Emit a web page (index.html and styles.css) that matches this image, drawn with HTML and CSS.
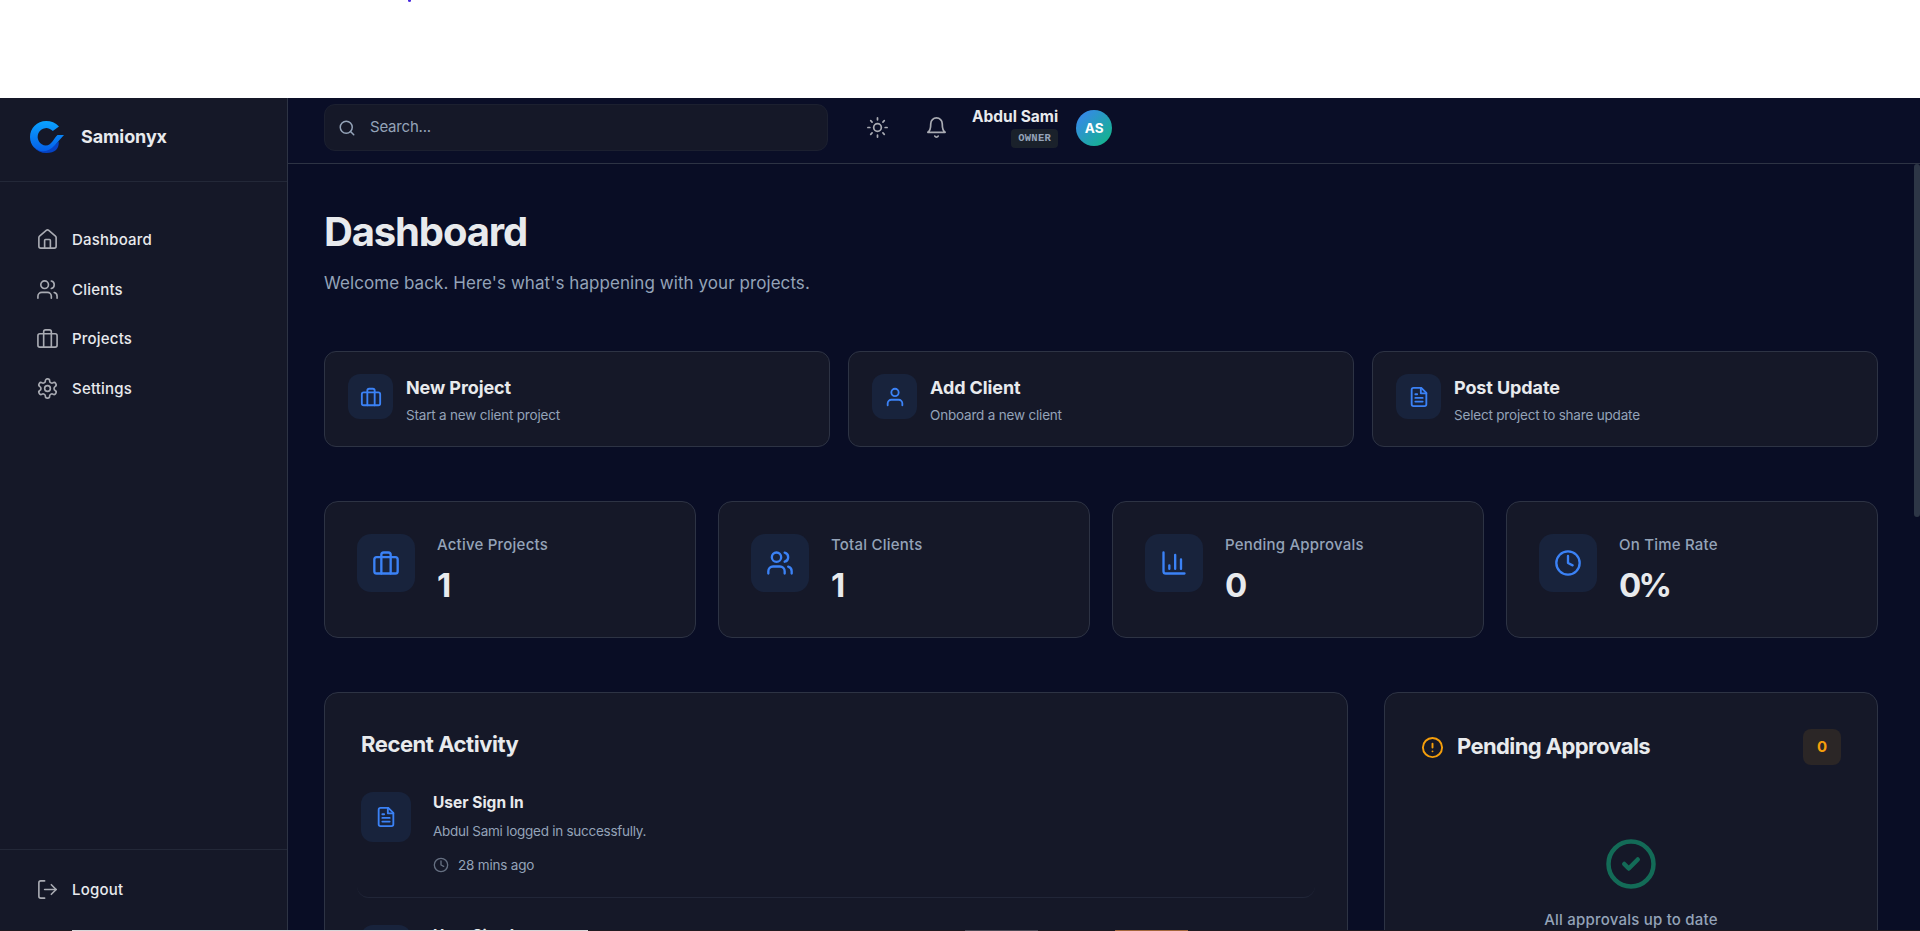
FILE: index.html
```
<!DOCTYPE html>
<html lang="en">
<head>
  <meta charset="UTF-8">
  <meta name="viewport" content="width=device-width, initial-scale=1.0">
  <title>Samionyx - Dashboard</title>
  <link rel="stylesheet" href="styles.css">
</head>
<body>
  <!-- icon sprite -->
  <svg class="sprite" xmlns="http://www.w3.org/2000/svg">
    <symbol id="i-home" viewBox="0 0 24 24"><path d="M15 21v-8a1 1 0 0 0-1-1h-4a1 1 0 0 0-1 1v8"/><path d="M3 10a2 2 0 0 1 .709-1.528l7-5.999a2 2 0 0 1 2.582 0l7 5.999A2 2 0 0 1 21 10v9a2 2 0 0 1-2 2H5a2 2 0 0 1-2-2z"/></symbol>
    <symbol id="i-users" viewBox="0 0 24 24"><path d="M16 21v-2a4 4 0 0 0-4-4H6a4 4 0 0 0-4 4v2"/><circle cx="9" cy="7" r="4"/><path d="M22 21v-2a4 4 0 0 0-3-3.87"/><path d="M16 3.13a4 4 0 0 1 0 7.75"/></symbol>
    <symbol id="i-case" viewBox="0 0 24 24"><rect x="2" y="7" width="20" height="14" rx="2"/><path d="M16 21V5a2 2 0 0 0-2-2h-4a2 2 0 0 0-2 2v16"/></symbol>
    <symbol id="i-gear" viewBox="0 0 24 24"><path d="M12.22 2h-.44a2 2 0 0 0-2 2v.18a2 2 0 0 1-1 1.73l-.43.25a2 2 0 0 1-2 0l-.15-.08a2 2 0 0 0-2.73.73l-.22.38a2 2 0 0 0 .73 2.73l.15.1a2 2 0 0 1 1 1.72v.51a2 2 0 0 1-1 1.74l-.15.09a2 2 0 0 0-.73 2.73l.22.38a2 2 0 0 0 2.73.73l.15-.08a2 2 0 0 1 2 0l.43.25a2 2 0 0 1 1 1.73V20a2 2 0 0 0 2 2h.44a2 2 0 0 0 2-2v-.18a2 2 0 0 1 1-1.73l.43-.25a2 2 0 0 1 2 0l.15.08a2 2 0 0 0 2.73-.73l.22-.39a2 2 0 0 0-.73-2.73l-.15-.08a2 2 0 0 1-1-1.74v-.5a2 2 0 0 1 1-1.74l.15-.09a2 2 0 0 0 .73-2.73l-.22-.38a2 2 0 0 0-2.73-.73l-.15.08a2 2 0 0 1-2 0l-.43-.25a2 2 0 0 1-1-1.73V4a2 2 0 0 0-2-2z"/><circle cx="12" cy="12" r="3"/></symbol>
    <symbol id="i-logout" viewBox="0 0 24 24"><path d="M9 21H5a2 2 0 0 1-2-2V5a2 2 0 0 1 2-2h4"/><path d="M16 17l5-5-5-5"/><path d="M21 12H9"/></symbol>
    <symbol id="i-search" viewBox="0 0 24 24"><circle cx="11" cy="11" r="8"/><path d="M21 21l-4.3-4.3"/></symbol>
    <symbol id="i-sun" viewBox="0 0 24 24"><circle cx="12" cy="12" r="4"/><path d="M12 2v2M12 20v2M4.93 4.93l1.41 1.41M17.66 17.66l1.41 1.41M2 12h2M20 12h2M6.34 17.66l-1.41 1.41M19.07 4.93l-1.41 1.41"/></symbol>
    <symbol id="i-bell" viewBox="0 0 24 24"><path d="M6 8a6 6 0 0 1 12 0c0 7 3 9 3 9H3s3-2 3-9"/><path d="M10.3 21a1.94 1.94 0 0 0 3.4 0"/></symbol>
    <symbol id="i-user" viewBox="0 0 24 24"><path d="M20 21v-2a4 4 0 0 0-4-4H8a4 4 0 0 0-4 4v2"/><circle cx="12" cy="7" r="4"/></symbol>
    <symbol id="i-file" viewBox="0 0 24 24"><path d="M14.5 2H6a2 2 0 0 0-2 2v16a2 2 0 0 0 2 2h12a2 2 0 0 0 2-2V7.5z"/><path d="M14 2v6h6"/><path d="M10 9H8M16 13H8M16 17H8"/></symbol>
    <symbol id="i-chart" viewBox="0 0 24 24"><path d="M3 3v16a2 2 0 0 0 2 2h16"/><path d="M18 17V9M13 17V5M8 17v-3"/></symbol>
    <symbol id="i-clock" viewBox="0 0 24 24"><circle cx="12" cy="12" r="10"/><path d="M12 6v6l4 2"/></symbol>
    <symbol id="i-alert" viewBox="0 0 24 24"><circle cx="12" cy="12" r="10"/><path d="M12 8v4M12 16h.01"/></symbol>
    <symbol id="i-check" viewBox="0 0 24 24"><circle cx="12" cy="12" r="10"/><path d="M9 12l2 2 4-4"/></symbol>
  </svg>

  <div class="top-space"><span class="dot"></span></div>

  <div class="app">
    <aside class="sidebar">
      <div class="brand">
        <svg class="logo" viewBox="0 0 34 32">
          <defs>
            <linearGradient id="logoMain" x1="0" y1="0" x2="0" y2="1">
              <stop offset="0" stop-color="#0aa2ff"/>
              <stop offset="1" stop-color="#0560e8"/>
            </linearGradient>
          </defs>
          <path fill="#0643c4" d="M4 26.5C9 30.500 18 30 28.700 20.500C29.400 27.500 25 32 16.500 32C11 32 7 30 4 26.500z"/>
          <path fill="url(#logoMain)" d="M29 5.600C25.500 1.800 21 0 16.200 0C7 0 0 7 0 16C0 24.500 6 30 13 30.200C22 30.500 28 20 34 14H27.500C24 16.500 22 24.500 15.800 24.500A8.700 8.700 0 1 1 22.800 10z"/>
        </svg>
        <span>Samionyx</span>
      </div>
      <nav class="nav">
        <a class="nav-item"><svg class="icon"><use href="#i-home"/></svg>Dashboard</a>
        <a class="nav-item"><svg class="icon"><use href="#i-users"/></svg>Clients</a>
        <a class="nav-item"><svg class="icon"><use href="#i-case"/></svg>Projects</a>
        <a class="nav-item"><svg class="icon"><use href="#i-gear"/></svg>Settings</a>
      </nav>
      <div class="sidebar-footer">
        <a class="nav-item"><svg class="icon"><use href="#i-logout"/></svg>Logout</a>
      </div>
    </aside>

    <div class="content">
      <header class="header">
        <div class="search">
          <svg class="icon"><use href="#i-search"/></svg>
          <span>Search...</span>
        </div>
        <svg class="icon header-icon"><use href="#i-sun"/></svg>
        <svg class="icon header-icon"><use href="#i-bell"/></svg>
        <div class="user">
          <span class="user-name">Abdul Sami</span>
          <span class="role">OWNER</span>
        </div>
        <div class="avatar">AS</div>
      </header>

      <main class="main">
        <h1>Dashboard</h1>
        <p class="subtitle">Welcome back. Here's what's happening with your projects.</p>

        <section class="quick">
          <div class="card quick-card">
            <div class="icon-box"><svg class="icon"><use href="#i-case"/></svg></div>
            <div>
              <h3>New Project</h3>
              <p>Start a new client project</p>
            </div>
          </div>
          <div class="card quick-card">
            <div class="icon-box"><svg class="icon"><use href="#i-user"/></svg></div>
            <div>
              <h3>Add Client</h3>
              <p>Onboard a new client</p>
            </div>
          </div>
          <div class="card quick-card">
            <div class="icon-box"><svg class="icon"><use href="#i-file"/></svg></div>
            <div>
              <h3>Post Update</h3>
              <p>Select project to share update</p>
            </div>
          </div>
        </section>

        <section class="stats">
          <div class="card stat-card">
            <div class="icon-box"><svg class="icon"><use href="#i-case"/></svg></div>
            <div>
              <p class="label">Active Projects</p>
              <p class="value">1</p>
            </div>
          </div>
          <div class="card stat-card">
            <div class="icon-box"><svg class="icon"><use href="#i-users"/></svg></div>
            <div>
              <p class="label">Total Clients</p>
              <p class="value">1</p>
            </div>
          </div>
          <div class="card stat-card">
            <div class="icon-box"><svg class="icon"><use href="#i-chart"/></svg></div>
            <div>
              <p class="label">Pending Approvals</p>
              <p class="value">0</p>
            </div>
          </div>
          <div class="card stat-card">
            <div class="icon-box"><svg class="icon"><use href="#i-clock"/></svg></div>
            <div>
              <p class="label">On Time Rate</p>
              <p class="value">0%</p>
            </div>
          </div>
        </section>

        <section class="panels">
          <div class="card activity">
            <h2>Recent Activity</h2>
            <div class="activity-item">
              <div class="icon-box"><svg class="icon"><use href="#i-file"/></svg></div>
              <div>
                <h4>User Sign In</h4>
                <p>Abdul Sami logged in successfully.</p>
                <div class="time"><svg class="icon"><use href="#i-clock"/></svg>28 mins ago</div>
              </div>
            </div>
            <div class="activity-item">
              <div class="icon-box"><svg class="icon"><use href="#i-file"/></svg></div>
              <div>
                <h4>User Sign In</h4>
              </div>
            </div>
          </div>

          <div class="card approvals">
            <div class="approvals-head">
              <svg class="icon"><use href="#i-alert"/></svg>
              <h2>Pending Approvals</h2>
              <span class="count">0</span>
            </div>
            <div class="empty">
              <svg class="icon"><use href="#i-check"/></svg>
              <p>All approvals up to date</p>
            </div>
          </div>
        </section>
      </main>
    </div>
    <div class="scroll-thumb"></div>
  </div>

  <div class="bottom-edge">
    <span class="edge edge-light"></span>
    <span class="edge edge-grey"></span>
    <span class="edge edge-orange"></span>
  </div>
</body>
</html>
```
FILE: styles.css
```
* {
  box-sizing: border-box;
}
body {
  margin: 0;
  height: 931px;
  display: flex;
  flex-direction: column;
  overflow: hidden;
  position: relative;
  background-color: #ffffff;
  color: #e8eaed;
  font-family: Inter, "Liberation Sans", sans-serif;
}
h1, h2, h3, h4, p {
  margin: 0;
}
.sprite {
  position: absolute;
  width: 0;
  height: 0;
}
.icon {
  width: 22px;
  height: 22px;
  flex-shrink: 0;
  display: block;
  fill: none;
  stroke: currentColor;
  stroke-width: 2;
  stroke-linecap: round;
  stroke-linejoin: round;
}

.top-space {
  height: 98px;
  flex-shrink: 0;
  position: relative;
}
.dot {
  position: absolute;
  left: 408px;
  top: 0;
  width: 3px;
  height: 2px;
  border-radius: 0 0 2px 2px;
  background-color: #4a2be0;
}
.app {
  flex: 1;
  min-height: 0;
  display: flex;
  overflow: hidden;
  position: relative;
  background-color: #0a0e27;
}

/* sidebar */
.sidebar {
  width: 288px;
  flex-shrink: 0;
  display: flex;
  flex-direction: column;
  background-color: #151828;
  border-right: 1px solid #2d3344;
}
.brand {
  display: flex;
  align-items: center;
  gap: 17px;
  height: 84px;
  padding: 0 30px 5px;
  border-bottom: 1px solid #232838;
  font-size: 18px;
  font-weight: 700;
  letter-spacing: -0.1px;
}
.brand span {
  padding-bottom: 2px;
}
.logo {
  width: 34px;
  height: 32px;
}
.nav {
  flex: 1;
  display: flex;
  flex-direction: column;
  gap: 4px;
  padding-top: 35px;
}
.nav-item {
  display: flex;
  align-items: center;
  gap: 13px;
  height: 45.6px;
  padding-left: 36px;
  font-size: 15px;
  font-weight: 550;
  letter-spacing: 0.2px;
}
.nav-item .icon {
  width: 23px;
  height: 23px;
  color: #a9abb3;
  stroke-width: 1.7;
}
.sidebar-footer {
  height: 82px;
  padding-top: 17px;
  border-top: 1px solid #232838;
}

/* header */
.content {
  flex: 1;
  min-width: 0;
  display: flex;
  flex-direction: column;
}
.header {
  height: 66px;
  flex-shrink: 0;
  display: flex;
  align-items: center;
  padding: 6px 36px 12px;
  border-bottom: 1px solid #2d3344;
}
.search {
  width: 504px;
  height: 47px;
  display: flex;
  align-items: center;
  gap: 14px;
  padding-left: 13px;
  background-color: #151828;
  border: 1px solid #1c2030;
  border-radius: 11px;
  color: #94a3b8;
  font-size: 15px;
  letter-spacing: -0.2px;
}
.search span {
  padding-bottom: 2px;
}
.search .icon {
  width: 18px;
  height: 18px;
}
.header-icon {
  width: 23px;
  height: 23px;
  margin-left: 38px;
  margin-bottom: 1px;
  color: #a9abb3;
  stroke-width: 1.8;
}
.header-icon + .header-icon {
  margin-left: 36px;
}
.user {
  display: flex;
  flex-direction: column;
  align-items: flex-end;
  gap: 2px;
  margin-left: 24px;
}
.user-name {
  font-size: 15.5px;
  font-weight: 650;
  line-height: 20px;
}
.role {
  height: 19px;
  padding: 0 7px;
  border-radius: 4px;
  background-color: #1a212b;
  color: #94a3b8;
  font-family: "Liberation Mono", monospace;
  font-size: 10.5px;
  font-weight: 700;
  line-height: 19px;
  letter-spacing: 0.3px;
}
.avatar {
  width: 36px;
  height: 36px;
  margin-left: 18px;
  border-radius: 50%;
  background: linear-gradient(135deg, #3b82f6, #10b981);
  color: #ffffff;
  font-size: 13.5px;
  font-weight: 700;
  line-height: 36px;
  text-align: center;
}

/* dashboard */
.main {
  flex: 1;
  min-height: 0;
  overflow: hidden;
  padding: 44px 42px 0 36px;
  background-color: #090d25;
}
h1 {
  font-size: 40px;
  font-weight: 750;
  line-height: 48px;
  letter-spacing: -1.15px;
}
.subtitle {
  margin-top: 14px;
  color: #94a3b8;
  font-size: 17px;
  line-height: 26px;
  letter-spacing: 0.07px;
}
.card {
  background-color: #151828;
  border: 1px solid #2d3344;
  border-radius: 14px;
}
.icon-box {
  flex-shrink: 0;
  display: flex;
  align-items: center;
  justify-content: center;
  border-radius: 12px;
  background-color: #18233c;
  color: #3b82f6;
}
.quick {
  display: grid;
  grid-template-columns: repeat(3, 1fr);
  gap: 18px;
  margin-top: 55px;
}
.quick-card {
  display: flex;
  gap: 13px;
  height: 96px;
  padding: 22px 23px;
  border-radius: 12px;
}
.quick-card .icon-box {
  width: 45px;
  height: 45px;
}
h3 {
  margin-top: 2px;
  font-size: 18px;
  font-weight: 650;
  line-height: 24px;
  letter-spacing: -0.1px;
}
.quick-card p {
  margin-top: 5px;
  color: #94a3b8;
  font-size: 13.5px;
  line-height: 20px;
  letter-spacing: -0.19px;
}
.stats {
  display: grid;
  grid-template-columns: repeat(4, 1fr);
  gap: 22px;
  margin-top: 54px;
}
.stat-card {
  display: flex;
  gap: 22px;
  height: 137px;
  padding: 32px;
}
.stat-card .icon-box {
  width: 58px;
  height: 58px;
  border-radius: 14px;
}
.stat-card .icon {
  width: 28px;
  height: 28px;
}
.label {
  padding-top: 1px;
  color: #94a3b8;
  font-size: 15px;
  font-weight: 500;
  line-height: 20px;
  letter-spacing: 0.22px;
}
.value {
  margin-top: 10px;
  font-size: 33px;
  font-weight: 700;
  line-height: 40px;
  letter-spacing: -2.8px;
}
.panels {
  display: grid;
  grid-template-columns: 1024px 1fr;
  gap: 36px;
  margin-top: 54px;
}
.activity, .approvals {
  height: 460px;
  padding: 36px;
}
h2 {
  font-size: 22px;
  font-weight: 650;
  line-height: 28px;
  letter-spacing: -0.45px;
}
.activity h2 {
  padding-top: 1px;
  margin-bottom: 7px;
}
.activity-item {
  display: flex;
  gap: 22px;
  height: 133px;
  margin: 0 -4px;
  padding: 27px 4px 0;
  border-bottom: 1px solid #212638;
  border-radius: 12px;
}
.activity-item .icon-box {
  width: 50px;
  height: 50px;
}
h4 {
  font-size: 15.5px;
  font-weight: 650;
  line-height: 22px;
}
.activity-item p {
  margin-top: 7px;
  color: #94a3b8;
  font-size: 13.5px;
  line-height: 20px;
  letter-spacing: -0.26px;
}
.time {
  display: flex;
  align-items: center;
  gap: 9px;
  margin-top: 14px;
  color: #94a3b8;
  font-size: 13.5px;
  line-height: 20px;
  letter-spacing: -0.2px;
}
.time .icon {
  width: 16px;
  height: 16px;
  color: #667082;
}
.approvals-head {
  display: flex;
  align-items: center;
  gap: 13px;
  height: 36px;
}
.approvals-head .icon {
  width: 23px;
  height: 23px;
  color: #f59e0b;
}
.approvals-head h2 {
  padding-bottom: 2px;
  letter-spacing: -0.6px;
}
.count {
  width: 38px;
  height: 36px;
  margin-left: auto;
  border-radius: 8px;
  background-color: #2b2626;
  color: #f59e0b;
  font-size: 15px;
  font-weight: 700;
  line-height: 35px;
  text-align: center;
}
.empty {
  display: flex;
  flex-direction: column;
  align-items: center;
  margin-top: 72px;
  color: #94a3b8;
  font-size: 15px;
  font-weight: 500;
  line-height: 22px;
  letter-spacing: 0.22px;
}
.empty .icon {
  width: 54px;
  height: 54px;
  margin-bottom: 18px;
  color: #136b57;
}
.scroll-thumb {
  position: absolute;
  top: 66px;
  right: 0;
  width: 6px;
  height: 353px;
  border-radius: 3px;
  background-color: #2d3646;
}

/* thin strip along the bottom of the window */
.bottom-edge {
  position: absolute;
  left: 0;
  right: 0;
  bottom: 0;
  height: 1px;
  background-color: #1f1a20;
}
.edge {
  position: absolute;
  top: 0;
  height: 1px;
}
.edge-light {
  left: 72px;
  width: 516px;
  background-color: #d8d5d8;
}
.edge-grey {
  left: 965px;
  width: 73px;
  background-color: #4c4a55;
}
.edge-orange {
  left: 1115px;
  width: 73px;
  background-color: #a5673c;
}
```
